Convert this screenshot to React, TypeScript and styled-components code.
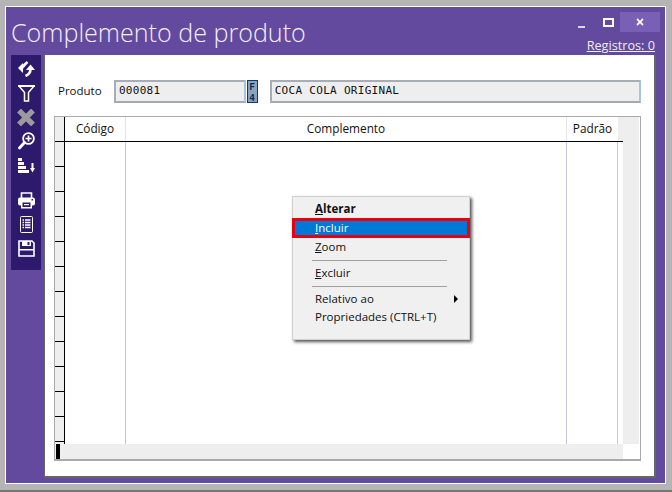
import React from 'react';
import styled, {createGlobalStyle} from 'styled-components';
import {FaTimes} from 'react-icons/fa';

const GlobalStyle = createGlobalStyle`
    html, body {
        margin: 0;
        padding: 0;
        background: #b4b4b4;
    }
    body {
        font-family: 'Open Sans', 'Liberation Sans', sans-serif;
    }
`;

const ROW_COUNT = 12;

const SwapIcon = () => (
    <svg width='17' height='16' viewBox='0 0 17 16'>
        <path d='M0 7 L5 2 V12 Z' fill='#fff'/>
        <path d='M4 7 C5.5 5 7 3 9.5 1' fill='none' stroke='#fff' strokeWidth='2.6'/>
        <path d='M12.5 3.5 L17 9 H8 Z' fill='#fff'/>
        <path d='M12.5 8 C12.5 11 11 13.5 7.5 15' fill='none' stroke='#fff' strokeWidth='2.6'/>
    </svg>
);

const FunnelIcon = () => (
    <svg width='17' height='17' viewBox='0 0 17 17' fill='none' stroke='#fff'>
        <path d='M0 1 H17' strokeWidth='2'/>
        <path d='M1 1 L6.5 7.5 V16 H10.5 V7.5 L16 1' strokeWidth='1.5'/>
    </svg>
);

const CrossIcon = () => (
    <svg width='18' height='17' viewBox='0 0 18 17' fill='none' stroke='#9b9b9b' strokeWidth='5.4'>
        <path d='M2 1.5 L16 15.5 M16 1.5 L2 15.5'/>
    </svg>
);

const ZoomPlusIcon = () => (
    <svg width='17' height='18' viewBox='0 0 17 18' fill='none' stroke='#fff'>
        <circle cx='10.5' cy='6.5' r='5.4' strokeWidth='1.8'/>
        <path d='M7.5 6.5 H13.5 M10.5 3.5 V9.5' strokeWidth='1.7'/>
        <path d='M6.5 10.5 L1.5 16' strokeWidth='2.8' strokeLinecap='round'/>
    </svg>
);

const SortIcon = () => (
    <svg width='17' height='15' viewBox='0 0 17 15' fill='#fff'>
        <rect x='0' y='0' width='4' height='3'/>
        <rect x='0' y='4' width='6' height='3'/>
        <rect x='0' y='8' width='8' height='3'/>
        <rect x='0' y='12' width='11' height='3'/>
        <path d='M13.5 5 H15.5 V10 H17 L14.5 14.5 L12 10 H13.5 Z'/>
    </svg>
);

const PrinterIcon = () => (
    <svg width='17' height='17' viewBox='0 0 17 17'>
        <path d='M3.5 6 V1 H13.5 V6' fill='none' stroke='#fff' strokeWidth='1.6'/>
        <rect x='0' y='5.5' width='17' height='8' rx='2' fill='#fff'/>
        <rect x='3' y='9' width='11' height='7.5' fill='#fff'/>
        <rect x='4.5' y='10.5' width='8' height='4.5' fill='#2e1a6c'/>
        <rect x='6' y='12' width='5' height='1.2' fill='#fff'/>
        <rect x='13.5' y='7' width='1.5' height='1.5' fill='#2e1a6c'/>
    </svg>
);

const ListIcon = () => (
    <svg width='13' height='17' viewBox='0 0 13 17' fill='none' stroke='#fff'>
        <rect x='0.5' y='0.5' width='12' height='16' rx='1'/>
        <path d='M2.5 4 H4 M5 4 H10.5 M2.5 6.5 H4 M5 6.5 H10.5 M2.5 9 H4 M5 9 H10.5 M2.5 11.5 H4 M5 11.5 H10.5' strokeWidth='1.5'/>
    </svg>
);

const SaveIcon = () => (
    <svg width='17' height='17' viewBox='0 0 17 17'>
        <path d='M1 1 H14 L16 3 V16 H1 Z' fill='none' stroke='#fff' strokeWidth='1.6'/>
        <rect x='4' y='1' width='9' height='5' fill='#fff'/>
        <rect x='9.5' y='2' width='2' height='3' fill='#2e1a6c'/>
        <rect x='1' y='9' width='15' height='1.5' fill='#fff'/>
    </svg>
);

const Screen = styled.div`
    width: 672px;
    height: 492px;
    box-sizing: border-box;
    padding: 6px 6px 6px 5px;
    background: #b4b4b4;
    border-bottom: 2px solid #777;
    overflow: hidden;
`;

const Window = styled.div`
    height: 100%;
    box-sizing: border-box;
    display: flex;
    flex-direction: column;
    background: #634a9e;
    border: 1px solid #fff;
`;

const TitleBar = styled.div`
    height: 48px;
    flex: none;
    display: flex;
    justify-content: space-between;
    padding: 0 5px 0 5px;
`;

const Title = styled.div`
    margin-top: 9px;
    font-size: 25.1px;
    line-height: 32px;
    font-weight: 300;
    color: #f2f0fa;
`;

const TitleRight = styled.div`
    display: flex;
    flex-direction: column;
    align-items: flex-end;
    width: 90px;
`;

const WindowButtons = styled.div`
    display: flex;
    align-items: center;
    height: 20px;
    margin-top: 5px;
`;

const WindowButton = styled.div<{$active?: boolean}>`
    width: ${(p) => (p.$active ? '40px' : '24px')};
    height: 20px;
    display: flex;
    align-items: center;
    justify-content: center;
    background: ${(p) => (p.$active ? '#7a60b4' : 'transparent')};
    color: #fff;
`;

const MinimizeGlyph = styled.span`
    width: 7px;
    height: 2px;
    margin: 9px 5px 0 0;
    background: #d8d8d8;
`;

const MaximizeGlyph = styled.span`
    width: 7px;
    height: 5px;
    border: 2px solid #fff;
`;

const Registros = styled.a`
    margin-top: 5px;
    margin-right: 5px;
    font-size: 12.7px;
    line-height: 16px;
    color: #eee;
    text-decoration: underline;
    white-space: nowrap;
`;

const Body = styled.div`
    flex: 1;
    min-height: 0;
    display: flex;
    align-items: flex-start;
`;

const Toolbar = styled.div`
    width: 30px;
    height: 215px;
    flex: none;
    margin: 0 3px 0 5px;
    display: flex;
    flex-direction: column;
    align-items: center;
    background: #2e1a6c;
`;

const ToolIcon = styled.div<{$gap?: number}>`
    height: 24px;
    width: 100%;
    flex: none;
    display: flex;
    align-items: center;
    justify-content: center;
    color: #fff;
    margin-top: ${(p) => p.$gap ?? 0}px;
`;

const Content = styled.div`
    position: relative;
    width: 612px;
    height: 423px;
    box-sizing: border-box;
    background: #fff;
    border-style: solid;
    border-width: 0 2px 2px 1px;
    border-color: #666;
    padding: 25px 13px 0 9px;
`;

const ProductRow = styled.div`
    display: flex;
    align-items: center;
    height: 23px;
`;

const Label = styled.label`
    width: 60px;
    padding: 0 0 3px 4px;
    box-sizing: border-box;
    font-size: 11.5px;
    color: #111;
`;

const Field = styled.div<{$width: number}>`
    width: ${(p) => p.$width}px;
    height: 23px;
    box-sizing: border-box;
    padding-left: 3px;
    background: #eee;
    border: 2px solid #a6adb8;
    border-right-color: #a9c4e2;
    border-bottom-color: #a6a9ae;
    font-family: 'DejaVu Sans Mono', 'Liberation Mono', monospace;
    font-size: 11px;
    letter-spacing: 0.3px;
    line-height: 17px;
    color: #111;
    white-space: nowrap;
`;

const LookupButton = styled.div`
    width: 11px;
    height: 23px;
    box-sizing: border-box;
    margin: 0 12px 0 1px;
    background: #8ba2bc;
    border: 1px solid #0a3a72;
    color: #0a2f5c;
    font-family: 'DejaVu Sans Mono', monospace;
    font-size: 9.5px;
    font-weight: 700;
    line-height: 11px;
    text-align: center;
`;

const Grid = styled.div`
    margin-top: 13px;
    height: 345px;
    box-sizing: border-box;
    border: 1px solid #aaa;
    border-bottom-width: 2px;
    display: grid;
    grid-template-columns: 1fr 17px;
    grid-template-rows: 1fr 15px;
`;

const Table = styled.div`
    display: flex;
    flex-direction: column;
    min-width: 0;
    overflow: hidden;
`;

const HeaderRow = styled.div`
    height: 25px;
    flex: none;
    box-sizing: border-box;
    display: grid;
    grid-template-columns: 10px 61px 441px 51px 1fr;
    border-bottom: 1px solid #000;
    font-size: 11.8px;
    color: #111;
`;

const CornerCell = styled.div`
    background: #eee;
    border-right: 1px solid #000;
`;

const HeaderCell = styled.div<{$edge?: boolean}>`
    display: flex;
    align-items: center;
    justify-content: center;
    border-right: ${(p) => (p.$edge ? 'none' : '1px solid #e4e4e8')};
    padding-bottom: 2px;
`;

const HeaderEnd = styled.div`
    background: #eee;
`;

const Rows = styled.div`
    flex: 1;
    min-height: 0;
    display: grid;
    grid-template-columns: 10px 61px 441px 51px 1fr;
`;

const RowHeaders = styled.div`
    display: flex;
    flex-direction: column;
    border-right: 1px solid #000;
    background: #eee;
    overflow: hidden;
`;

const RowHeader = styled.div`
    height: 25px;
    flex: none;
    box-sizing: border-box;
    border-bottom: 1px solid #000;
`;

const DataColumn = styled.div`
    border-right: 1px solid #c9c4e0;
`;

const VerticalTrack = styled.div`
    grid-row: 1;
    grid-column: 2;
    background: #eee;
    margin-right: 1px;
`;

const HorizontalTrack = styled.div`
    grid-row: 2;
    grid-column: 1;
    background: #eee;
    padding: 0 0 0 1px;
`;

const Thumb = styled.div`
    width: 4px;
    height: 15px;
    background: #000;
`;

const ContextMenu = styled.div`
    position: absolute;
    left: 247px;
    top: 141px;
    width: 178px;
    height: 144px;
    box-sizing: border-box;
    padding: 2px 0;
    background: #f0f0f0;
    border: 1px solid #d0d0d0;
    box-shadow: 2px 2px 3px #555;
    font-size: 11.5px;
    color: #111;
`;

const MenuItem = styled.div<{$bold?: boolean; $selected?: boolean}>`
    position: relative;
    height: 19px;
    line-height: ${(p) => (p.$bold ? 19 : 18)}px;
    box-sizing: border-box;
    padding-left: 22px;
    font-weight: ${(p) => (p.$bold ? 700 : 400)};
    color: ${(p) => (p.$selected ? '#fff' : '#111')};
    &:last-child {
        margin-top: -1px;
    }
    ${(p) => p.$selected && `
        margin: 0 -1px;
        padding-left: 23px;
        background: #0078d7;
        outline: 3px solid #e8000f;
        outline-offset: -3px;
        height: 20px;
        line-height: 20px;
    `}
`;

const Separator = styled.div`
    height: 1px;
    margin: 3px 22px 3px 19px;
    background: #a0a0a0;
`;

const SubArrow = styled.span`
    position: absolute;
    right: 11px;
    top: 5px;
    width: 0;
    height: 0;
    border-left: 4px solid #000;
    border-top: 4px solid transparent;
    border-bottom: 4px solid transparent;
`;

const App = () => (
    <>
        <GlobalStyle/>
        <Screen>
            <Window>
                <TitleBar>
                    <Title>{'Complemento de produto'}</Title>
                    <TitleRight>
                        <WindowButtons>
                            <WindowButton><MinimizeGlyph/></WindowButton>
                            <WindowButton><MaximizeGlyph/></WindowButton>
                            <WindowButton $active={true}><FaTimes size={10}/></WindowButton>
                        </WindowButtons>
                        <Registros>{'Registros: 0'}</Registros>
                    </TitleRight>
                </TitleBar>
                <Body>
                    <Toolbar>
                        <ToolIcon $gap={2}><SwapIcon/></ToolIcon>
                        <ToolIcon><FunnelIcon/></ToolIcon>
                        <ToolIcon><CrossIcon/></ToolIcon>
                        <ToolIcon><ZoomPlusIcon/></ToolIcon>
                        <ToolIcon><SortIcon/></ToolIcon>
                        <ToolIcon $gap={11}><PrinterIcon/></ToolIcon>
                        <ToolIcon><ListIcon/></ToolIcon>
                        <ToolIcon><SaveIcon/></ToolIcon>
                    </Toolbar>
                    <Content>
                        <ProductRow>
                            <Label>{'Produto'}</Label>
                            <Field $width={132}>{'000081'}</Field>
                            <LookupButton>{'F'}<br/>{'4'}</LookupButton>
                            <Field $width={372}>{'COCA COLA ORIGINAL'}</Field>
                        </ProductRow>
                        <Grid>
                            <Table>
                                <HeaderRow>
                                    <CornerCell/>
                                    <HeaderCell>{'Código'}</HeaderCell>
                                    <HeaderCell>{'Complemento'}</HeaderCell>
                                    <HeaderCell $edge={true}>{'Padrão'}</HeaderCell>
                                    <HeaderEnd/>
                                </HeaderRow>
                                <Rows>
                                    <RowHeaders>
                                        {Array.from({length: ROW_COUNT}, (_, i) => <RowHeader key={i}/>)}
                                    </RowHeaders>
                                    <DataColumn/>
                                    <DataColumn/>
                                    <DataColumn/>
                                    <div/>
                                </Rows>
                            </Table>
                            <VerticalTrack/>
                            <HorizontalTrack><Thumb/></HorizontalTrack>
                        </Grid>
                        <ContextMenu>
                            <MenuItem $bold={true}><u>{'A'}</u>{'lterar'}</MenuItem>
                            <MenuItem $selected={true}><u>{'I'}</u>{'ncluir'}</MenuItem>
                            <MenuItem><u>{'Z'}</u>{'oom'}</MenuItem>
                            <Separator/>
                            <MenuItem><u>{'E'}</u>{'xcluir'}</MenuItem>
                            <Separator/>
                            <MenuItem>{'Relativo ao'}<SubArrow/></MenuItem>
                            <MenuItem>{'Propriedades (CTRL+T)'}</MenuItem>
                        </ContextMenu>
                    </Content>
                </Body>
            </Window>
        </Screen>
    </>
);

export default App;
